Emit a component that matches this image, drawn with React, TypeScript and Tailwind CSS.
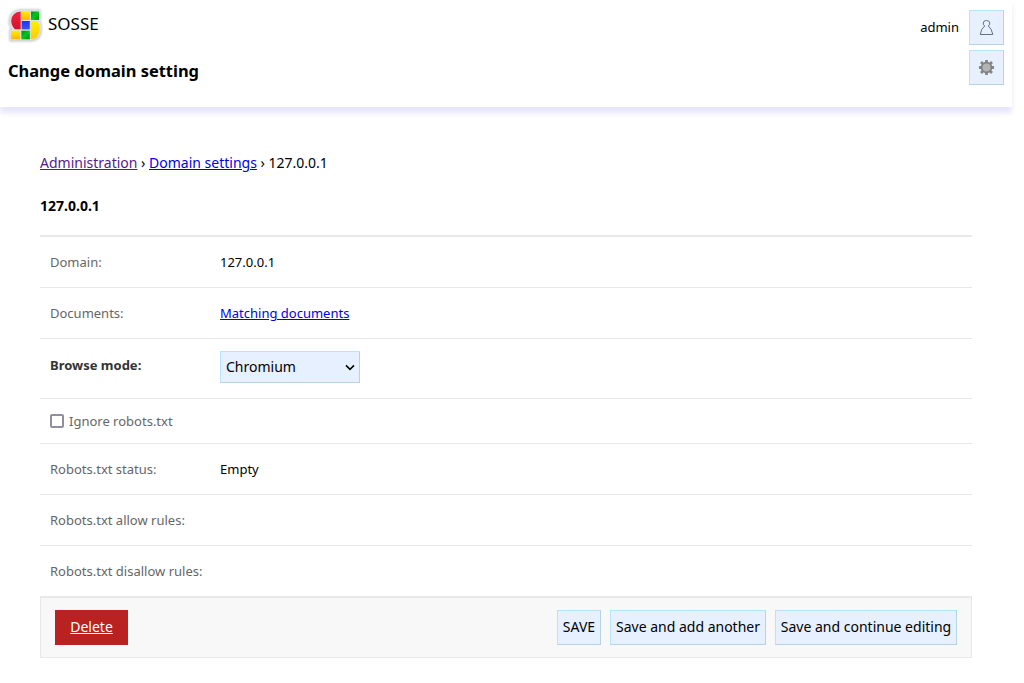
import type { ReactNode } from 'react';

const control =
  'border border-t-[#b8e3fb] border-l-[#b8e3fb] border-r-[#b5d3e4] border-b-[#b5d3e4] bg-[#e6f0ff]';

function Logo() {
  return (
    <svg width="34" height="34" viewBox="0 0 34 34" className="block overflow-visible">
      <defs>
        <linearGradient id="red" x2="0" y2="1">
          <stop offset="0" stopColor="#f0223c" />
          <stop offset="1" stopColor="#d51430" />
        </linearGradient>
        <linearGradient id="yellow" x2="0" y2="1">
          <stop offset="0" stopColor="#ffee00" />
          <stop offset="1" stopColor="#ffb400" />
        </linearGradient>
        <linearGradient id="gold" x2="0" y2="1">
          <stop offset="0" stopColor="#fff000" />
          <stop offset="1" stopColor="#ffcc00" />
        </linearGradient>
        <linearGradient id="green" x2="1" y2="1">
          <stop offset="0" stopColor="#008a18" />
          <stop offset="0.5" stopColor="#00c820" />
          <stop offset="1" stopColor="#008514" />
        </linearGradient>
        <linearGradient id="blue" x2="0" y2="1">
          <stop offset="0" stopColor="#1838f0" />
          <stop offset="1" stopColor="#3c50ff" />
        </linearGradient>
        <filter id="soft" x="-20%" y="-20%" width="140%" height="140%">
          <feGaussianBlur stdDeviation="0.8" />
        </filter>
      </defs>
      <path
        d="M12 1.3H32.6V14Q34.2 17 34 21.5Q33.6 33.2 22.5 33.4H1.2V21.2H3Q0.4 18 0.7 12.5Q1.4 1.8 12 1.3Z"
        fill="#c6c8cc"
        filter="url(#soft)"
      />
      <path d="M12 2.3H31.8V14Q33.2 17 33 21Q32.6 32 22.5 32.3H2.2V22H4.4Q1.6 18 1.8 13Q2.4 3 12 2.3Z" fill="#e0e2e5" />
      <path d="M12.7 3.5V21.2H6.8Q3.2 17.6 3.2 12.5Q3.8 4.3 12.7 3.5Z" fill="url(#red)" />
      <rect x="13.6" y="3.5" width="8.4" height="8.4" fill="url(#yellow)" />
      <rect x="23" y="3.5" width="8" height="8.4" fill="url(#green)" />
      <rect x="13.6" y="13" width="8.2" height="8.4" fill="url(#blue)" />
      <path d="M22.8 13H29.1Q31.9 16.7 31.8 21.3Q31.3 30.8 22.8 31.3Z" fill="url(#gold)" />
      <rect x="3.2" y="22.7" width="9" height="8.6" fill="url(#yellow)" />
      <rect x="13.4" y="22.7" width="8.4" height="8.6" fill="url(#green)" />
    </svg>
  );
}

function PersonIcon() {
  return (
    <svg width="17" height="19" viewBox="0 0 17 19" fill="none" stroke="#66707e" strokeWidth="1">
      <path d="M6.7 8Q5.2 7 5.2 5Q5.4 2.5 8.5 2.5Q11.6 2.5 11.8 5Q11.8 7 10.3 8Q13.8 10.5 14.8 16.5H2.2Q3.2 10.5 6.7 8Z" />
    </svg>
  );
}

function GearIcon() {
  return (
    <svg width="17" height="17" viewBox="0 0 17 17">
      <g stroke="#858585" strokeWidth="2.8">
        <path d="M8.5 1V16M1 8.5H16M3 3L14 14M14 3L3 14" />
      </g>
      <circle cx="8.5" cy="8.5" r="4.9" fill="#b3b3b3" stroke="#808080" strokeWidth="1.7" />
    </svg>
  );
}

function Row({ label, children }: { label: string; children?: ReactNode }) {
  return (
    <div className="flex h-[51px] items-center border-b border-[#e8e8e8] px-2.5">
      <div className="w-[170px] text-[#666]">{label}</div>
      <div>{children}</div>
    </div>
  );
}

export default function App() {
  return (
    <div className="h-[683px] overflow-hidden bg-white font-['Noto_Sans',sans-serif] text-[13px] leading-5 text-black">
      <header className="flex h-[107px] w-[1012px] justify-between px-2 shadow-[0_6px_5px_#e6e6fa]">
        <div>
          <div className="flex pt-2">
            <Logo />
            <div className="ml-1.5 pt-1 text-[17px] leading-6">SOSSE</div>
          </div>
          <h1 className="mt-[17px] text-[16.45px] leading-6 font-bold">Change domain setting</h1>
        </div>
        <div className="flex gap-2.5 pt-2.5">
          <div className="pt-[7px]">admin</div>
          <div className="flex flex-col gap-[5px]">
            <button className={`${control} flex size-[35px] items-center justify-center`} aria-label="User">
              <PersonIcon />
            </button>
            <button className={`${control} flex size-[35px] items-center justify-center`} aria-label="Settings">
              <GearIcon />
            </button>
          </div>
        </div>
      </header>

      <main className="ml-10 w-[932px] pt-[46px]">
        <nav className="text-sm leading-5">
          <a href="#" className="text-[#551a8b] underline">Administration</a> ›{' '}
          <a href="#" className="text-[#0000ee] underline">Domain settings</a> › 127.0.0.1
        </nav>
        <h2 className="mt-[23px] text-sm leading-5 font-bold">127.0.0.1</h2>

        <section className="mt-[19px] border-t-2 border-[#e8e8e8]">
          <Row label="Domain:">127.0.0.1</Row>
          <Row label="Documents:">
            <a href="#" className="text-[#0000ee] underline">Matching documents</a>
          </Row>
          <div className="flex h-[60px] border-b border-[#e8e8e8] px-2.5">
            <div className="w-[170px] pt-4 font-bold text-[#333]">Browse mode:</div>
            <button className={`${control} mt-3 flex h-8 w-[140px] items-center justify-between pr-[3px] pl-[5px] text-sm`}>
              Chromium
              <svg width="12" height="12" viewBox="0 0 12 12" fill="none" stroke="#000" strokeWidth="1.5">
                <path d="M2 4.4L6 8.4L10 4.4" />
              </svg>
            </button>
          </div>
          <label className="flex h-[45px] items-center border-b border-[#e8e8e8] px-2.5 text-[#666]">
            <span className="mr-[5px] size-3.5 rounded-[2px] border-2 border-[#8f8f9d] bg-white" />
            Ignore robots.txt
          </label>
          <Row label="Robots.txt status:">Empty</Row>
          <Row label="Robots.txt allow rules:" />
          <Row label="Robots.txt disallow rules:" />
        </section>

        <footer className="flex h-[61px] justify-between border border-[#e8e8e8] bg-[#f8f8f8] px-3.5 pt-3 text-sm leading-5">
          <a href="#" className="flex h-[35px] w-[73px] items-center justify-center bg-[#ba2121] pb-0.5 text-white underline">
            Delete
          </a>
          <div className="flex gap-[9px]">
            <button className={`${control} h-[35px] w-11 pb-0.5 whitespace-nowrap`}>SAVE</button>
            <button className={`${control} h-[35px] w-[156px] pb-0.5 whitespace-nowrap`}>Save and add another</button>
            <button className={`${control} h-[35px] w-[182px] pb-0.5 whitespace-nowrap`}>Save and continue editing</button>
          </div>
        </footer>
      </main>
    </div>
  );
}
